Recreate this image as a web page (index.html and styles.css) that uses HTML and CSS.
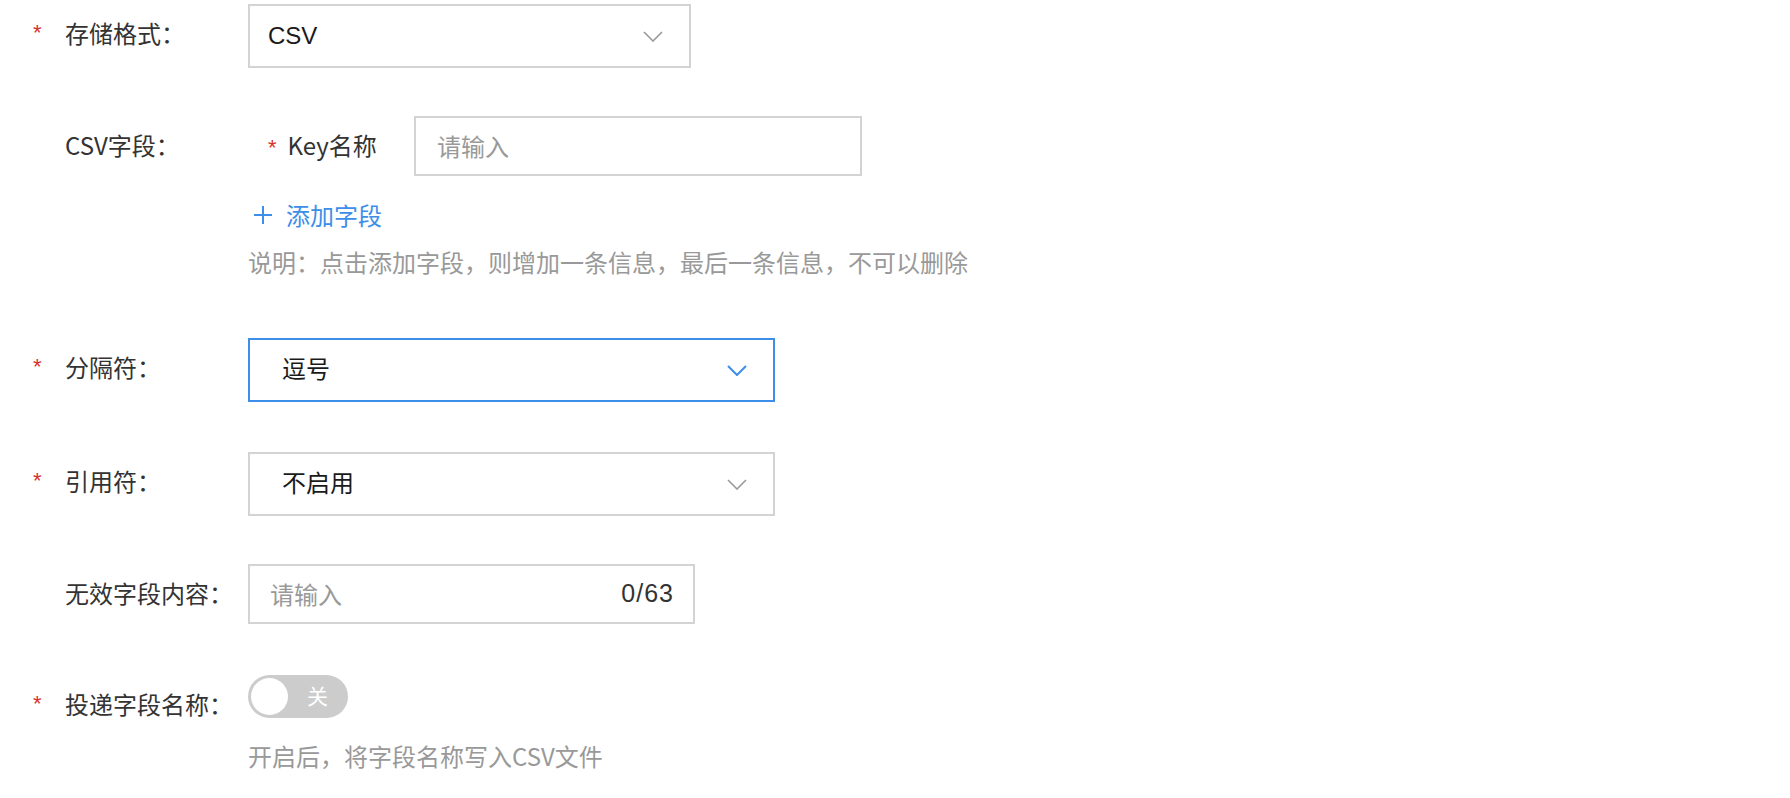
FILE: index.html
```html
<!DOCTYPE html>
<html lang="zh-CN">
<head>
<meta charset="utf-8">
<title>CSV</title>
<link rel="stylesheet" href="styles.css">
</head>
<body>
<div class="form">
  <div class="item item-first">
    <div class="label"><span class="req">*</span>存储格式：</div>
    <div class="control">
      <div class="select select-narrow">
        <span class="value value-latin">CSV</span>
        <svg class="chev" viewBox="0 0 20 11" width="20" height="11"><path d="M1 1 L10 10 L19 1" fill="none" stroke="#999" stroke-width="1.6"/></svg>
      </div>
    </div>
  </div>

  <div class="item item-csv">
    <div class="label"><span class="req req-empty"></span>CSV字段：</div>
    <div class="control control-col">
      <div class="key-row">
        <div class="key-label"><span class="req-inline">*</span>Key名称</div>
        <div class="input input-key"><span class="placeholder">请输入</span></div>
      </div>
      <div class="add-link">
        <svg class="plus" viewBox="0 0 20 20" width="20" height="20"><path d="M10 1 V19 M1 10 H19" fill="none" stroke="#3d8ee8" stroke-width="2"/></svg>
        <span>添加字段</span>
      </div>
      <div class="hint hint-csv">说明：点击添加字段，则增加一条信息，最后一条信息，不可以删除</div>
    </div>
  </div>

  <div class="item item-sep">
    <div class="label"><span class="req">*</span>分隔符：</div>
    <div class="control">
      <div class="select select-wide select-active">
        <span class="value">逗号</span>
        <svg class="chev" viewBox="0 0 20 11" width="20" height="11"><path d="M1 1 L10 10 L19 1" fill="none" stroke="#3d8ee8" stroke-width="2"/></svg>
      </div>
    </div>
  </div>

  <div class="item item-quote">
    <div class="label"><span class="req">*</span>引用符：</div>
    <div class="control">
      <div class="select select-wide">
        <span class="value">不启用</span>
        <svg class="chev" viewBox="0 0 20 11" width="20" height="11"><path d="M1 1 L10 10 L19 1" fill="none" stroke="#999" stroke-width="1.6"/></svg>
      </div>
    </div>
  </div>

  <div class="item item-invalid">
    <div class="label"><span class="req req-empty"></span>无效字段内容：</div>
    <div class="control">
      <div class="input input-invalid"><span class="placeholder">请输入</span><span class="count">0/63</span></div>
    </div>
  </div>

  <div class="item item-switch">
    <div class="label"><span class="req">*</span>投递字段名称：</div>
    <div class="control control-col">
      <div class="switch"><span class="knob"></span><span class="switch-text">关</span></div>
      <div class="hint hint-switch">开启后，将字段名称写入CSV文件</div>
    </div>
  </div>
</div>
</body>
</html>
```

FILE: styles.css
```css
* { box-sizing: border-box; }
html, body { margin: 0; padding: 0; background: #fff; }
body {
  font-family: "Liberation Sans", "Noto Sans CJK SC", sans-serif;
  font-size: 24px;
  color: #333;
}
.form { padding-top: 4px; }
.item { display: flex; align-items: flex-start; }
.item-csv { margin-top: 48px; }
.item-sep { margin-top: 59px; }
.item-quote { margin-top: 50px; }
.item-invalid { margin-top: 48px; }
.item-switch { margin-top: 51px; }

.label {
  width: 248px;
  flex: none;
  display: flex;
  padding-left: 33px;
  line-height: 58px;
  height: 58px;
  color: #333;
  font-family: "Noto Sans CJK SC", sans-serif;
}
.req {
  width: 32px;
  flex: none;
  color: #d9302c;
  font-family: "Liberation Sans", sans-serif;
  font-size: 22px;
}
.control { display: flex; }
.control-col { flex-direction: column; }

.select {
  height: 64px;
  border: 2px solid #d3d3d3;
  display: flex;
  align-items: center;
  justify-content: space-between;
  padding-right: 26px;
  color: #1a1a1a;
}
.select-narrow { width: 443px; padding-left: 18px; }
.select-wide { width: 527px; padding-left: 32px; padding-bottom: 5px; }
.select-wide .chev { margin-top: 5px; }
.select-active { border-color: #3d8ee8; }
.value { font-family: "Noto Sans CJK SC", sans-serif; }
.value-latin { font-family: "Liberation Sans", sans-serif; }
.chev { display: block; }

.key-row { display: flex; align-items: flex-start; }
.key-label {
  width: 166px;
  padding-left: 20px;
  line-height: 58px;
  font-family: "Noto Sans CJK SC", sans-serif;
  color: #333;
}
.req-inline {
  color: #d9302c;
  font-family: "Liberation Sans", sans-serif;
  font-size: 22px;
  margin-right: 11px;
}
.input {
  height: 60px;
  border: 2px solid #d3d3d3;
  display: flex;
  align-items: center;
  justify-content: space-between;
  font-family: "Noto Sans CJK SC", sans-serif;
  padding-bottom: 2px;
}
.input-key { width: 448px; padding-left: 21px; }
.input-invalid { width: 447px; padding-left: 20px; padding-right: 19px; }
.placeholder { color: #999; }
.count {
  color: #333;
  font-family: "Liberation Sans", sans-serif;
  font-size: 25px;
  letter-spacing: 1px;
}

.add-link {
  margin-top: 21px;
  display: flex;
  align-items: center;
  padding-left: 5px;
  line-height: 34px;
  color: #3d8ee8;
  font-family: "Noto Sans CJK SC", sans-serif;
}
.plus { margin-right: 13px; display: block; }
.hint {
  line-height: 34px;
  color: #999;
  font-family: "Noto Sans CJK SC", sans-serif;
}
.hint-csv { margin-top: 13px; }
.hint-switch { margin-top: 21px; }

.switch {
  position: relative;
  width: 100px;
  height: 43px;
  border-radius: 22px;
  background: #cccccc;
}
.knob {
  position: absolute;
  left: 3px;
  top: 3px;
  width: 37px;
  height: 37px;
  border-radius: 50%;
  background: #fff;
}
.switch-text {
  position: absolute;
  left: 59px;
  top: 0;
  line-height: 41px;
  font-size: 21px;
  color: #fff;
  font-family: "Noto Sans CJK SC", sans-serif;
}
```
